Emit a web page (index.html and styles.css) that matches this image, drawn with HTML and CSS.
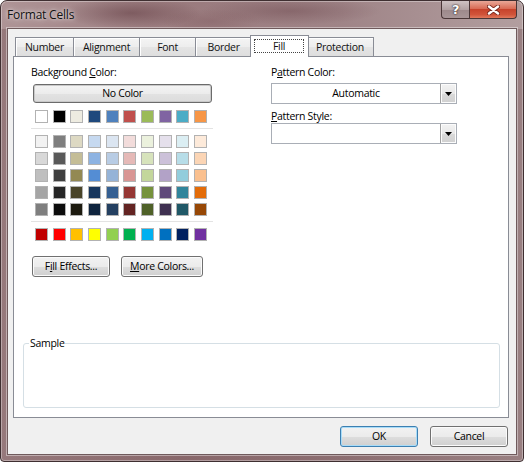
FILE: index.html
```html
<!DOCTYPE html>
<html lang="en">
<head>
  <meta charset="UTF-8" />
  <meta name="viewport" content="width=device-width, initial-scale=1.0">
  <title>Format Cells</title>
  <link rel="stylesheet" href="styles.css">
</head>
<body>

  <div class="window">
    <div class="titlebar">
      <span class="title">Format Cells</span>
      <div class="caption-buttons">
        <div class="cap-btn help">?</div>
        <div class="cap-btn close">
          <svg width="13" height="10" viewBox="0 0 13 10">
            <path d="M2 1.5 L11 8.5 M11 1.5 L2 8.5" stroke="#7a2a1e" stroke-width="4.2" stroke-linecap="round" />
            <path d="M2 1.5 L11 8.5 M11 1.5 L2 8.5" stroke="#ffffff" stroke-width="2.4" stroke-linecap="round" />
          </svg>
        </div>
      </div>
    </div>

    <div class="client">
      <div class="tabs">
        <div class="tab">Number</div>
        <div class="tab">Alignment</div>
        <div class="tab">Font</div>
        <div class="tab">Border</div>
        <div class="tab active"><span class="focus">Fill</span></div>
        <div class="tab">Protection</div>
      </div>

      <div class="panel">
        <div class="columns">
          <div class="col-left">
            <div class="label">Background <u>C</u>olor:</div>
            <button class="btn no-color">No Color</button>
            <div class="swatches first" id="row-base"></div>
            <div class="sep"></div>
            <div class="swatches" id="row-theme"></div>
            <div class="sep"></div>
            <div class="swatches" id="row-std"></div>
            <div class="btn-row">
              <button class="btn fill-btn">F<u>i</u>ll Effects...</button>
              <button class="btn more-btn"><u>M</u>ore Colors...</button>
            </div>
          </div>

          <div class="col-right">
            <div class="label">P<u>a</u>ttern Color:</div>
            <div class="combo">
              <span class="combo-text">Automatic</span>
              <span class="combo-arrow"><svg width="7" height="4" viewBox="0 0 7 4"><polygon points="0,0 7,0 3.5,4" fill="#000" /></svg></span>
            </div>
            <div class="label second"><u>P</u>attern Style:</div>
            <div class="combo tight">
              <span class="combo-text"></span>
              <span class="combo-arrow"><svg width="7" height="4" viewBox="0 0 7 4"><polygon points="0,0 7,0 3.5,4" fill="#000" /></svg></span>
            </div>
          </div>
        </div>

        <fieldset class="sample">
          <legend>Sample</legend>
          <div class="sample-area"></div>
        </fieldset>
      </div>

      <div class="footer">
        <button class="btn dlg-btn default">OK</button>
        <button class="btn dlg-btn">Cancel</button>
      </div>
    </div>
  </div>

  <script>
    const base = ['#FFFFFF', '#000000', '#EEECE1', '#1F497D', '#4F81BD', '#C0504D', '#9BBB59', '#8064A2', '#4BACC6', '#F79646'];
    const theme = [
      '#F2F2F2', '#7F7F7F', '#DDD9C3', '#C6D9F0', '#DBE5F1', '#F2DCDB', '#EBF1DD', '#E5E0EC', '#DBEEF3', '#FDEADA',
      '#D8D8D8', '#595959', '#C4BD97', '#8DB3E2', '#B8CCE4', '#E5B9B7', '#D7E3BC', '#CCC1D9', '#B7DDE8', '#FBD5B5',
      '#BFBFBF', '#3F3F3F', '#938953', '#548DD4', '#95B3D7', '#D99694', '#C3D69B', '#B2A2C7', '#92CDDC', '#FAC08F',
      '#A5A5A5', '#262626', '#494429', '#17365D', '#366092', '#953734', '#76923C', '#5F497A', '#31859B', '#E36C09',
      '#7F7F7F', '#0C0C0C', '#1D1B10', '#0F243E', '#244061', '#632423', '#4F6128', '#3F3151', '#205867', '#974806'
    ];
    const standard = ['#C00000', '#FF0000', '#FFC000', '#FFFF00', '#92D050', '#00B050', '#00B0F0', '#0070C0', '#002060', '#7030A0'];

    function fillRow(id, colors) {
      const row = document.getElementById(id);
      colors.forEach(c => {
        const s = document.createElement('span');
        s.className = 'swatch';
        s.style.background = c;
        row.appendChild(s);
      });
    }

    fillRow('row-base', base);
    fillRow('row-theme', theme);
    fillRow('row-std', standard);
  </script>

</body>
</html>
```

FILE: styles.css
```css
* {
  box-sizing: border-box;
}

body {
  margin: 0;
  font-family: "Open Sans", "Noto Sans", sans-serif;
  font-size: 10.5px;
  letter-spacing: -0.3px;
  color: #000;
  background: #fff;
}

u {
  text-decoration-thickness: 1px;
  text-underline-offset: 1px;
}

.window {
  width: 524px;
  height: 462px;
  display: flex;
  flex-direction: column;
  border: 1px solid #3f2f31;
  border-radius: 7px 7px 4px 4px;
  background:
    linear-gradient(to bottom, transparent 28px, rgba(95, 58, 62, 0.3) 28px),
    radial-gradient(ellipse 70px 16px at 130px 12px, rgba(85, 45, 52, 0.45), transparent),
    radial-gradient(ellipse 90px 14px at 290px 10px, rgba(95, 55, 62, 0.35), transparent),
    radial-gradient(ellipse 50px 12px at 210px 20px, rgba(120, 80, 85, 0.3), transparent),
    linear-gradient(to right, #ae9496, #9a7b7e 35%, #9f8487 65%, #b29e9f);
  box-shadow: inset 0 0 0 1px rgba(255, 255, 255, 0.35);
}

/* title bar */
.titlebar {
  height: 27px;
  display: flex;
  align-items: flex-start;
}

.title {
  margin: 6px 0 0 6px;
  font-size: 12px;
  line-height: 16px;
  letter-spacing: -0.2px;
  color: #111;
  text-shadow: 0 0 6px rgba(255, 255, 255, 0.8), 0 0 3px rgba(255, 255, 255, 0.6);
}

.caption-buttons {
  display: flex;
  margin-left: auto;
  margin-right: 6px;
}

.cap-btn {
  height: 18px;
  display: flex;
  align-items: center;
  justify-content: center;
  border: 1px solid #4a3637;
  border-top: none;
}

.help {
  width: 28px;
  border-right: none;
  border-radius: 0 0 0 4px;
  background: linear-gradient(#cfc2c3, #b3a2a3 50%, #9c888a 51%, #a89597);
  color: #fff;
  font-family: "DejaVu Sans", sans-serif;
  font-weight: bold;
  font-size: 13px;
  text-shadow: 0 0 2px #2a1c1d, 0 0 1px #2a1c1d;
}

.close {
  width: 48px;
  border-radius: 0 0 4px 0;
  background: linear-gradient(#e9a797, #d86b55 45%, #c7432c 50%, #d1543a 80%, #e0785c);
}

/* client area */
.client {
  flex: 1;
  display: flex;
  flex-direction: column;
  margin: 0 6px 6px 6px;
  background: #f0f0f0;
  border: 1px solid #6f5a5c;
  box-shadow: 0 0 0 1px rgba(255, 255, 255, 0.4);
}

.tabs {
  display: flex;
  align-items: flex-end;
  height: 21px;
  margin-top: 6px;
  padding-left: 7px;
}

.tab {
  height: 19px;
  min-width: 56px;
  padding: 0 9px;
  border: 1px solid #898c95;
  border-bottom: none;
  border-left: none;
  background: linear-gradient(#f4f4f4, #ededed 50%, #e4e4e4 51%, #dedede);
  box-shadow: inset 1px 1px 0 #fff;
  line-height: 18px;
  text-align: center;
  color: #111;
}

.tab:first-child {
  border-left: 1px solid #898c95;
}

.tab.active {
  position: relative;
  z-index: 1;
  height: 22px;
  min-width: 59px;
  margin: 0 -2px -1px -2px;
  padding: 0;
  border-left: 1px solid #898c95;
  background: #fff;
  box-shadow: none;
}

.focus {
  display: block;
  height: 14px;
  margin: 3px 4px 0 3px;
  border: 1px dotted #444;
  line-height: 12px;
}

.panel {
  flex: 1;
  display: flex;
  flex-direction: column;
  margin: 0 7px 0 5px;
  background: #fff;
  border: 1px solid #898c95;
}

.columns {
  display: flex;
  padding: 9px 0 0 17px;
}

.col-left {
  width: 183px;
}

.col-right {
  width: 186px;
  margin-left: 57px;
}

.label {
  line-height: 13px;
  white-space: nowrap;
}

.label.second {
  margin-top: 6px;
}

/* buttons */
.btn {
  font-family: inherit;
  font-size: inherit;
  letter-spacing: inherit;
  color: #000;
  padding: 0;
  border: 1px solid #707070;
  border-radius: 3px;
  background: linear-gradient(#f2f2f2, #ebebeb 50%, #dddddd 51%, #cfcfcf);
  box-shadow: inset 0 0 0 1px #fbfbfb;
}

.no-color {
  display: block;
  width: 179px;
  height: 19px;
  margin: 5px 0 0 2px;
  line-height: 17px;
  border-color: #6b6b6b;
  box-shadow: inset 0 0 0 1px #c9c9c9;
  background: linear-gradient(#f4f4f4, #ececec 50%, #e2e2e2 51%, #dcdcdc);
}

.btn-row {
  display: flex;
  gap: 11px;
  margin: 15px 0 0 1px;
}

.fill-btn,
.more-btn,
.dlg-btn {
  height: 21px;
  line-height: 19px;
}

.fill-btn {
  width: 78px;
}

.more-btn {
  width: 82px;
}

/* colour grid */
.swatches {
  display: grid;
  grid-template-columns: repeat(10, 13px);
  justify-content: space-between;
  row-gap: 4px;
  width: 172px;
  margin: 6px 0 0 4px;
}

.swatches.first {
  margin-top: 7px;
}

.swatch {
  width: 13px;
  height: 13px;
  border: 1px solid #b2b2b2;
}

.sep {
  width: 182px;
  height: 1px;
  margin-top: 5px;
  background: #e3e3e3;
}

/* combo boxes */
.combo {
  display: flex;
  height: 21px;
  margin-top: 4px;
  border: 1px solid #a9aeb6;
  background: #fff;
}

.combo.tight {
  margin-top: 0;
}

.combo-text {
  flex: 1;
  line-height: 19px;
  text-align: center;
}

.combo-arrow {
  width: 16px;
  display: flex;
  align-items: center;
  justify-content: center;
  border-left: 1px solid #a0a0a0;
  background: linear-gradient(#f3f3f3, #e8e8e8 50%, #dadada 51%, #d0d0d0);
  box-shadow: inset 0 0 0 1px #fcfcfc;
}

/* sample box */
.sample {
  margin: auto 8px 9px 9px;
  padding: 0;
  border: 1px solid #d5dfe5;
  border-radius: 3px;
}

.sample legend {
  margin-left: 5px;
  padding: 0 1px;
  line-height: 13px;
}

.sample-area {
  height: 57px;
}

/* footer */
.footer {
  height: 36px;
  display: flex;
  justify-content: flex-end;
  gap: 12px;
  padding: 8px 8px 0 0;
}

.dlg-btn {
  width: 78px;
}

.dlg-btn.default {
  border-color: #3c7fb1;
  box-shadow: inset 0 0 0 1px #a8dcf8;
}
```
